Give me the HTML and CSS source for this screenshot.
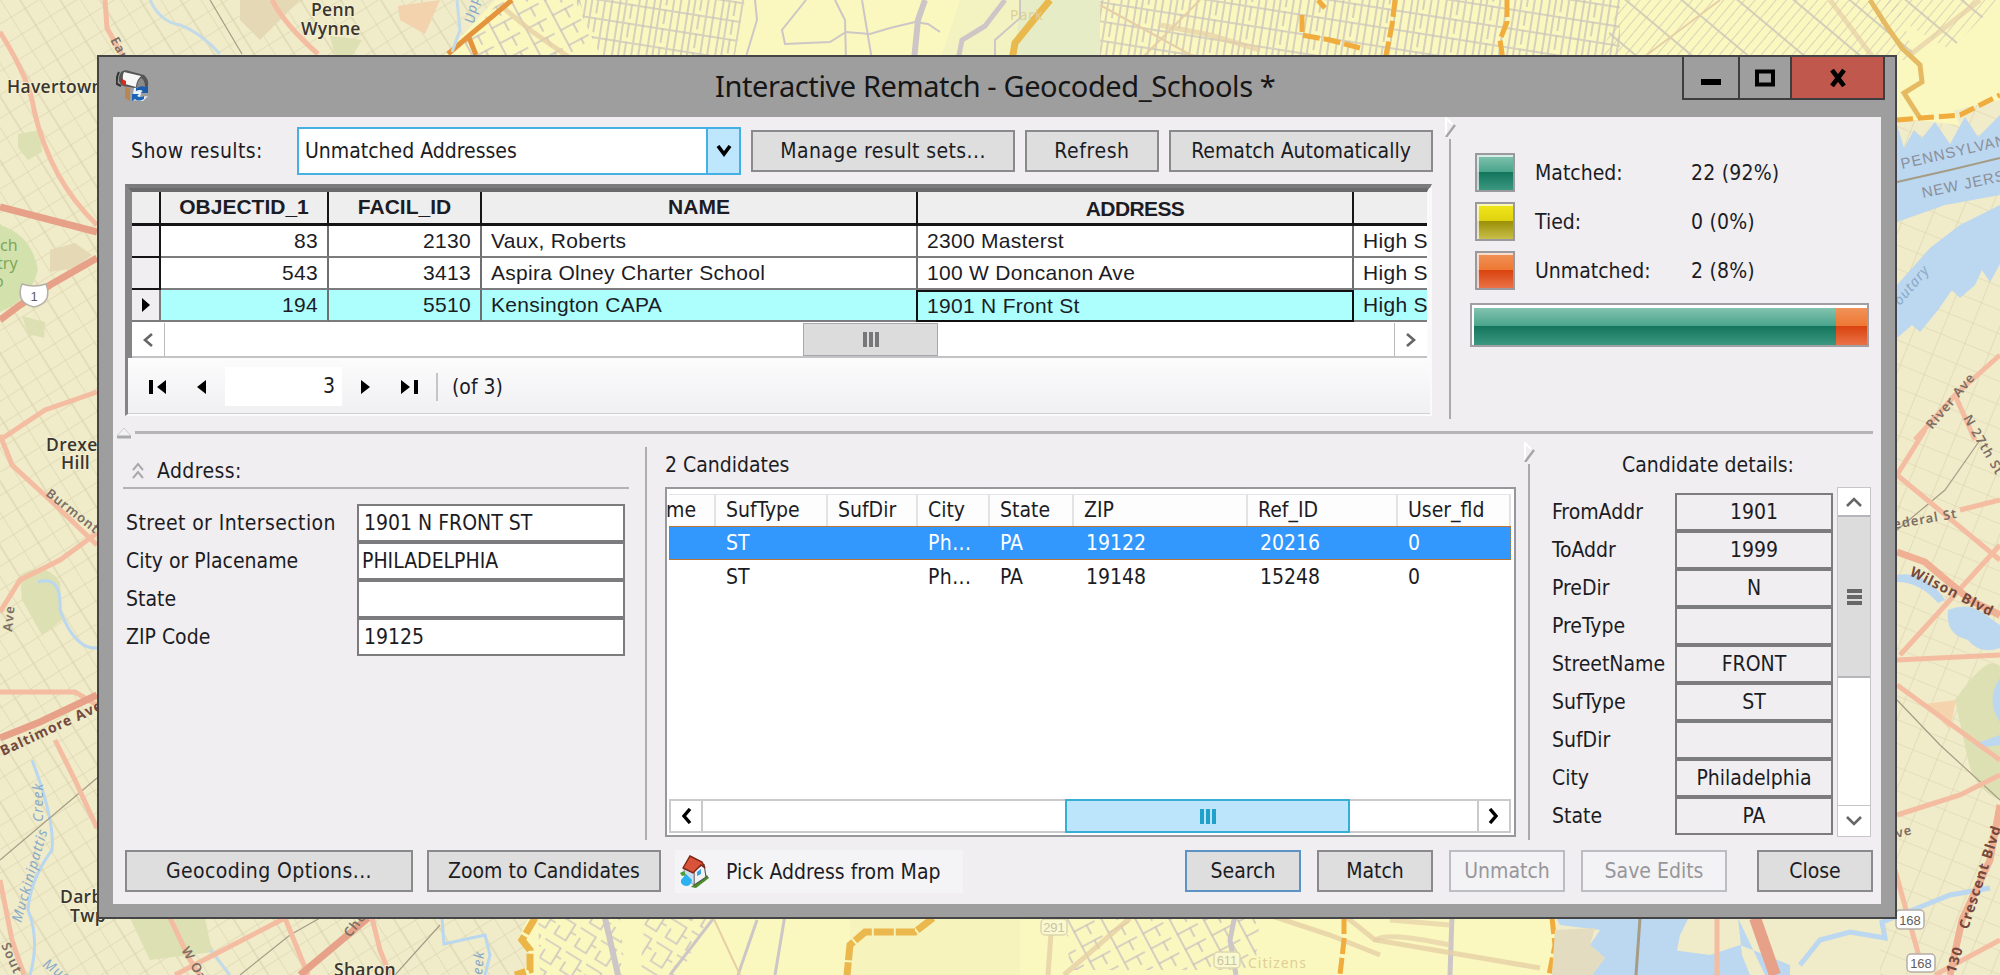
FILE: index.html
```html
<!DOCTYPE html>
<html lang="en">
<head>
<meta charset="utf-8">
<title>Interactive Rematch - Geocoded_Schools *</title>
<link rel="stylesheet" href="styles.css">
</head>
<body>
<svg class="map" viewBox="0 0 2000 975" width="2000" height="975">
  <defs>
    <pattern id="suburb" width="34" height="20" patternUnits="userSpaceOnUse" patternTransform="rotate(-32)">
      <path d="M0 0H34M0 0V20M17 0V20" stroke="#d5cfa9" stroke-width="1" fill="none"/>
    </pattern>
    <pattern id="suburb2" width="26" height="22" patternUnits="userSpaceOnUse" patternTransform="rotate(22)">
      <path d="M0 0H26M0 0V22" stroke="#d8d2ad" stroke-width="1.2" fill="none"/>
    </pattern>
    <pattern id="city" width="34" height="19" patternUnits="userSpaceOnUse" patternTransform="rotate(9)">
      <path d="M0 1H34M1 0V19M7 2V19M13 0V15M20 2V19M27 0V19" stroke="#cdc6bc" stroke-width="1.6" fill="none"/>
    </pattern>
    <pattern id="diag" width="36" height="8" patternUnits="userSpaceOnUse" patternTransform="rotate(-50)">
      <path d="M0 0H36M1 0V8" stroke="#cfc8b8" stroke-width="1.7" fill="none"/>
    </pattern>
    <pattern id="blocks" width="30" height="17" patternUnits="userSpaceOnUse" patternTransform="rotate(-28)">
      <path d="M0 1H24M1 0V17M15 0V11" stroke="#cdc5c0" stroke-width="1.6" fill="none"/>
    </pattern>
    <pattern id="loops" width="24" height="28" patternUnits="userSpaceOnUse" patternTransform="rotate(32)">
      <path d="M0 3H18V22H5V12M18 12H24" stroke="#cfc8c0" stroke-width="1.7" fill="none"/>
    </pattern>
  </defs>

  <rect width="2000" height="975" fill="#f0ebc9"/>
  <rect width="600" height="975" fill="url(#suburb)"/>
  <rect x="1880" width="120" height="975" fill="url(#suburb2)"/>

  <!-- parks and open ground -->
  <g fill="#dde0b2">
    <path d="M0 225Q32 235 38 270Q30 300 0 312Z" fill="#d3e2ad"/>
    <path d="M18 134L40 130L42 152L28 160L18 148Z"/>
    <path d="M22 316L45 322L44 338L28 334Z"/>
    <path d="M20 575Q45 560 60 582L62 620L42 635L22 600Z"/>
    <path d="M130 918H205L212 952L150 960Z"/>
    <path d="M330 36L362 40L352 56H335Z"/>
    <path d="M1955 700Q1990 650 2000 668V800Q1975 790 1968 760Z"/>
  </g>
  <g fill="#e4d9b4">
    <path d="M50 250L75 243L92 255L74 268L50 272Z"/>
    <path d="M240 0H300L260 40L240 20Z"/>
  </g>
  <path d="M398 6L440 0L425 34L400 20Z" fill="#f3d2ae"/>
  <path d="M1925 704L1956 700L1950 730Z" fill="#f5d3ad"/>

  <!-- city -->
  <path d="M495 0H1897L1925 50L1960 125L1897 118V60H440Z" fill="#faf8be"/>
  <path d="M1880 0H2000V100L1920 118L1890 120Z" fill="#faf8be"/>
  <path d="M532 910H1555V975H522L530 955L520 935Z" fill="#faf8be"/>
  <path d="M850 910H1020V975H850Z" fill="#f6f3bd"/>
  <path d="M960 0H1100V60H940Z" fill="#f3f3c2"/>
  <path d="M1020 0H1100V60H1015Z" fill="#e6edc6"/>
  <path d="M500 0H580L590 40L560 60H450Z" fill="url(#blocks)"/>
  <path d="M575 0H745L735 55H600Z" fill="url(#city)"/>
  <path d="M1100 0H1620V60H1100Z" fill="url(#city)"/>
  <path d="M1620 0H1897L1915 60H1600Z" fill="url(#diag)"/>
  <path d="M1880 0H2000L1950 50L1900 20Z" fill="url(#diag)"/>
  <path d="M538 915H620L625 975H540Z" fill="url(#loops)"/>
  <path d="M645 915H710L680 975H640Z" fill="url(#loops)"/>
  <path d="M1065 915H1260L1255 970H1070Z" fill="url(#blocks)"/>
  <g fill="none" stroke="#cdc6c6" stroke-width="2">
    <path d="M755 0L757 20L745 60M806 0L782 30L785 44L830 42L846 32L870 34L890 28L915 22L928 24L940 32"/>
    <path d="M835 0L845 20L846 60M862 0L872 60M1020 0V18L995 40V60"/>
    <path d="M925 0L918 20L914 60" stroke-width="6"/>
    <path d="M1005 0L985 26L962 40L958 60" stroke-width="5"/>
    <path d="M605 918L618 975" stroke-width="6"/>
    <path d="M785 915L775 975M757 920L738 975M716 915L670 975" stroke-width="3"/>
    <path d="M1235 915L1230 940L1236 975M1452 915L1450 975" stroke-width="5"/>
  </g>
  <g fill="none" stroke="#e6cfa6" stroke-width="5">
    <path d="M500 5L530 30L570 58M1052 920L1048 975M1130 918L1064 975M1260 912L1330 935L1380 955M1340 912L1375 940L1540 968" opacity=".8"/>
    <path d="M1375 942Q1378 930 1450 945M1390 920L1450 925M1160 25L1210 35L1260 50M1830 0L1875 60M1980 0L1910 55" opacity=".7"/>
    <path d="M1100 5L1200 60M1200 0L1140 60M1720 0L1640 60M712 915L740 975" stroke-width="2"/>
  </g>
  <g fill="none" stroke="#f0ac3c" stroke-width="5">
    <path d="M512 0L470 35L448 54M468 35L476 55" stroke="#e4943c"/>
    <path d="M1050 0L1032 22L1015 43L1012 60" stroke="#eab94e" stroke-width="7"/>
    <path d="M1395 0L1392 25L1385 60M1507 0V22L1500 40L1503 60M1318 0L1325 8M1302 15V35L1330 40L1360 48" stroke-dasharray="17 4"/>
    <path d="M1870 0L1888 28L1902 48L1920 65L1922 82L1904 93L1920 118" stroke="#e5ba63"/>
    <path d="M1897 120L1960 115L2000 95" stroke-dasharray="16 5"/>
    <path d="M535 918L522 940L530 950V970L515 975" stroke="#ebb548" stroke-width="7" stroke-dasharray="18 3"/>
    <path d="M933 918L915 932H885L865 932L850 945L847 975" stroke="#ebb84e" stroke-width="7" stroke-dasharray="20 2"/>
    <path d="M1344 918V940L1340 975M1552 918L1555 945L1549 975" stroke-dasharray="16 4"/>
  </g>

  <!-- rivers -->
  <g fill="#bcd7f0">
    <path d="M1897 125L1904 148L1914 130L1922 138L1935 122L1950 144L1965 117L1978 137L2000 115V195L1945 205L1897 222Z"/>
    <path d="M2000 220V264L1990 282L1982 270L1975 285L1960 298L1952 290L1938 310L1920 332L1912 325L1897 338V285L1930 248L1960 225L2000 205Z"/>
    <path d="M1897 575Q1925 570 1945 600L1938 603Q1920 582 1897 582Z"/>
    <path d="M1948 610Q1970 600 1990 618L2000 625V648Q1980 655 1968 640Q1945 635 1948 610Z"/>
    <path d="M2000 678Q1985 700 2000 722ZM1962 732L1980 742L2000 735V745L1978 748Z"/>
    <path d="M1555 915H1690L1680 935L1672 975H1592L1605 958L1590 945L1600 930L1560 925Z"/>
    <path d="M1672 950L1710 955L1740 945L1790 965V975H1660ZM1738 918L1742 955L1750 975H1765Z"/>
  </g>
  <path d="M1555 930L1595 928L1590 945L1605 958L1592 975H1552Z" fill="#e3dcc0"/>
  <path d="M1800 965L1820 940L1850 932L1885 938L1882 922L1900 915L1925 905L1950 895L1990 888" stroke="#bcd7f0" stroke-width="5" fill="none"/>
  <g stroke="#c3dbe9" stroke-width="3" fill="none">
    <path d="M150 0Q160 22 180 25Q200 32 220 54M457 0L460 30L452 52"/>
    <path d="M38 582Q62 575 60 610Q75 650 97 648M32 760Q55 820 52 850Q30 880 28 910Q40 940 30 975M442 918L444 944L485 935L490 955L485 975" stroke="#b9d7ef"/>
    <path d="M210 950L230 975"/>
  </g>
  <g stroke="#a59c86" stroke-width="2" fill="none">
    <path d="M1897 182L1950 170L2000 158"/>
    <path d="M1640 918L1636 975" stroke-width="3"/>
    <path d="M210 0L242 54M0 860L97 778M240 975L290 935L320 918M395 975L440 925M1897 700L1940 745L2000 800M1897 530L1945 490L1980 440" stroke-width="1.2"/>
  </g>

  <!-- highways -->
  <g stroke="#f4bda2" stroke-width="5" fill="none">
    <path d="M0 32Q30 80 34 110Q50 180 97 225M105 0L107 28L122 55M272 0Q285 25 318 54"/>
    <path d="M0 440L45 410L97 392M0 435L12 465L50 500L97 545M97 533L60 560L20 580L0 612M0 692H75L97 705M55 740L75 780L97 828"/>
    <path d="M0 880L12 940L24 975M170 918L190 960L200 975M285 918L200 962L175 975M285 918L308 975M372 918L380 950L390 975" />
    <path d="M2000 355L1955 395L1915 440M1955 395L1975 440M1925 430L1897 475M2000 545L1900 655M1897 660L2000 655M1897 475L2000 560M1897 685L2000 760M1897 815L1960 795L2000 775M1960 510L2000 500"/>
    <path d="M1717 918V975M1895 870L1920 960M2000 940L1935 975"/>
  </g>
  <g fill="none" stroke="#e6a188" stroke-width="7">
    <path d="M0 207L97 232M0 320L20 305L50 285L97 258M0 738L40 722L97 695M368 918L300 975"/>
    <path d="M1755 918L1775 975" stroke-width="12"/>
    <path d="M1897 552L1925 562L1970 600L2000 615M2000 805L1990 860L1962 920L1950 975" stroke="#efb093"/>
  </g>

  <g class="place">
    <text x="311" y="16">Penn</text>
    <text x="301" y="35">Wynne</text>
    <text x="7" y="93">Havertown</text>
    <text x="46" y="451">Drexel</text>
    <text x="61" y="469">Hill</text>
    <text x="60" y="903">Darby</text>
    <text x="70" y="922">Twp</text>
    <text x="334" y="976">Sharon</text>
  </g>
  <g class="street">
    <text transform="translate(110 40) rotate(62)">Earl</text>
    <text transform="translate(45 495) rotate(38)">Burmont</text>
    <text transform="translate(3 756) rotate(-25)" class="street-bold">Baltimore Ave</text>
    <text transform="translate(12 632) rotate(-84)">Ave</text>
    <text transform="translate(1 945) rotate(66)">Sout</text>
    <text transform="translate(181 950) rotate(60)">W Oak</text>
    <text transform="translate(350 938) rotate(-52)">Che</text>
    <text transform="translate(1932 430) rotate(-50)">River Ave</text>
    <text transform="translate(1963 418) rotate(60)">N 27th St</text>
    <text transform="translate(1894 529) rotate(-10)">ederal St</text>
    <text transform="translate(1909 575) rotate(27)" class="street-bold">Wilson Blvd</text>
    <text transform="translate(1968 930) rotate(-72)" class="street-bold">Crescent Blvd</text>
    <text transform="translate(1955 974) rotate(-72)" class="street-bold">130</text>
    <text transform="translate(1897 838) rotate(-15)">ve</text>
  </g>
  <g class="border-name">
    <text transform="translate(1902 169) rotate(-13)">PENNSYLVANIA</text>
    <text transform="translate(1923 198) rotate(-12)">NEW JERSEY</text>
  </g>
  <g class="water-name">
    <text transform="translate(1900 306) rotate(-50)">outary</text>
    <text transform="translate(21 923) rotate(-74)">Muckinipattis</text>
    <text transform="translate(43 822) rotate(-90)">Creek</text>
    <text transform="translate(42 966) rotate(35)">Muck</text>
    <text transform="translate(482 975) rotate(-85)">eek</text>
    <text transform="translate(474 24) rotate(-80)">Upp</text>
  </g>
  <g class="park-name">
    <text x="0" y="251">ch</text><text x="-3" y="269">try</text><text x="-6" y="287">o</text>
  </g>
  <g class="faint-name">
    <text x="1010" y="20">Park</text><text x="1248" y="968">Citizens</text>
  </g>
  <g fill="#fff" stroke="#b5afa5" stroke-width="1.5">
    <path d="M22 284Q34 288 46 284Q49 291 47 298Q44 305 34 307Q24 305 21 298Q19 291 22 284Z"/>
    <rect x="1896" y="910" width="28" height="19" rx="4"/>
    <rect x="1907" y="954" width="28" height="18" rx="4"/>
    <rect x="1041" y="919" width="26" height="16" rx="4" fill="#faf8cf" stroke="#ddd5ae"/>
    <rect x="1214" y="952" width="26" height="16" rx="4" fill="#faf8cf" stroke="#ddd5ae"/>
  </g>
  <g class="shield">
    <text x="34" y="301">1</text><text x="1910" y="925">168</text><text x="1921" y="968">168</text>
    <text x="1054" y="932" class="shield-faint">291</text><text x="1227" y="965" class="shield-faint">611</text>
  </g>
</svg>

<div class="window">
  <header class="titlebar">
    <svg class="app-icon" viewBox="0 0 33 33" width="33" height="33">
      <path d="M9 18V29L14 32V19Z" fill="#b98550"/>
      <path d="M5 3Q9 0 13 2L28 6Q33 10 32 17L31 20L19 19L7 17Q2 14 3 8Z" fill="#555"/>
      <path d="M8 3L25 7Q20 12 20 18L9 15Q5 9 8 3Z" fill="#f6f6f6"/>
      <path d="M25 9Q29 11 29 18L21 19Q21 12 25 9Z" fill="#8a8a8a"/>
      <path d="M3 3Q0 8 1 15L5 17" fill="none" stroke="#333" stroke-width="2"/>
      <path d="M6 10L10 12V17L6 15Z" fill="#d42f20"/>
      <path d="M18 19L27 18L24 28L32 27L27 32L16 31Z" fill="#e8f0fa"/>
      <path d="M20 19Q26 16 29 18L32 17V24H25L27 22Q24 20 20 22Z" fill="#1b5dab"/>
      <path d="M28 30Q22 33 19 30L16 32V25H23L21 27Q24 29 28 27Z" fill="#1b63b4"/>
    </svg>
    <h1 class="title">Interactive Rematch - Geocoded_Schools *</h1>
    <div class="win-buttons">
      <span class="win-btn"><svg viewBox="0 0 22 18" width="22" height="18"><path d="M1 10H21V16H1Z"/></svg></span>
      <span class="win-btn win-max"><svg viewBox="0 0 22 18" width="22" height="18"><path d="M3 2.5H19V15.5H3Z" fill="none" stroke="#000" stroke-width="4"/></svg></span>
      <span class="win-btn win-close"><svg viewBox="0 0 20 18" width="20" height="18"><path d="M4 1L16 17M16 1L4 17" stroke="#000" stroke-width="4.6"/></svg></span>
    </div>
  </header>

  <main class="client">
    <section class="results">
      <div class="results-left">
        <div class="toolbar">
          <label class="toolbar-label loose">Show results:</label>
          <div class="combo"><span class="combo-text">Unmatched Addresses</span><span class="combo-arrow"><svg viewBox="0 0 16 12" width="16" height="12"><path d="M2 1L8 9L14 1" fill="none" stroke="#000" stroke-width="3.6"/></svg></span></div>
          <button class="btn t-manage loose">Manage result sets...</button>
          <button class="btn t-refresh">Refresh</button>
          <button class="btn t-auto">Rematch Automatically</button>
        </div>
        <div class="grid-box">
          <div class="data-grid">
            <div class="row head"><span></span><span>OBJECTID_1</span><span>FACIL_ID</span><span>NAME</span><span class="low">ADDRESS</span><span></span></div>
            <div class="row"><span class="rh"></span><span class="num">83</span><span class="num">2130</span><span>Vaux, Roberts</span><span>2300 Masterst</span><span>High School</span></div>
            <div class="row"><span class="rh"></span><span class="num">543</span><span class="num">3413</span><span>Aspira Olney Charter School</span><span>100 W Doncanon Ave</span><span>High School</span></div>
            <div class="row current"><span class="rh"><svg viewBox="0 0 8 14" width="8" height="14"><path d="M0 0L8 7L0 14Z"/></svg></span><span class="num">194</span><span class="num">5510</span><span>Kensington CAPA</span><span class="focus">1901 N Front St</span><span>High School</span></div>
            <div class="hscroll grid-scroll">
              <span class="sb-btn"><svg viewBox="0 0 12 16" width="12" height="16"><path d="M10 2L3 8L10 14" fill="none" stroke="#666" stroke-width="2.6"/></svg></span>
              <span class="track"><span class="thumb grid-thumb"><i></i><i></i><i></i></span></span>
              <span class="sb-btn"><svg viewBox="0 0 12 16" width="12" height="16"><path d="M2 2L9 8L2 14" fill="none" stroke="#666" stroke-width="2.6"/></svg></span>
            </div>
          </div>
          <div class="nav">
            <svg viewBox="0 0 17 16" width="17" height="16"><path d="M0 1H4V15H0ZM17 1V15L8 8Z"/></svg>
            <svg class="prev" viewBox="0 0 9 16" width="9" height="16"><path d="M9 1V15L0 8Z"/></svg>
            <span class="nav-input">3</span>
            <svg class="next" viewBox="0 0 9 16" width="9" height="16"><path d="M0 1V15L9 8Z"/></svg>
            <svg class="last" viewBox="0 0 17 16" width="17" height="16"><path d="M13 1H17V15H13ZM0 1V15L9 8Z"/></svg>
            <span class="nav-sep"></span>
            <span class="nav-of">(of 3)</span>
          </div>
        </div>
      </div>
      <div class="vsplit split-top">
        <svg viewBox="0 0 12 20" width="12" height="20"><path d="M1 19V1L7 7" fill="none" stroke="#fff" stroke-width="2"/><path d="M1 20L10 8" stroke="#a5a5a5" stroke-width="2.4"/></svg>
        <span></span>
      </div>
      <div class="stats">
        <div class="stat"><span class="swatch green"></span><span class="stat-name">Matched:</span><span class="stat-val">22 (92%)</span></div>
        <div class="stat"><span class="swatch yellow"></span><span class="stat-name">Tied:</span><span class="stat-val">0 (0%)</span></div>
        <div class="stat"><span class="swatch orange"></span><span class="stat-name">Unmatched:</span><span class="stat-val">2 (8%)</span></div>
        <div class="bar"><span class="green bar-main"></span><span class="orange bar-rest"></span></div>
      </div>
    </section>

    <div class="hsplit">
      <svg viewBox="0 0 16 12" width="16" height="12"><path d="M1 9L8 1L15 9" fill="#f2f2f2" stroke="#ccc"/><path d="M1 10H15" stroke="#aaa" stroke-width="3"/></svg>
      <span></span>
    </div>

    <section class="details">
      <div class="address">
        <div class="address-head"><svg viewBox="0 0 14 18" width="14" height="18"><path d="M2 8L7 2L12 8M2 16L7 10L12 16" fill="none" stroke="#a9a9a9" stroke-width="2"/></svg><span class="loose">Address:</span></div>
        <div class="field"><label class="loose">Street or Intersection</label><span class="input">1901 N FRONT ST</span></div>
        <div class="field"><label>City or Placename</label><span class="input tight">PHILADELPHIA</span></div>
        <div class="field"><label>State</label><span class="input"></span></div>
        <div class="field"><label>ZIP Code</label><span class="input">19125</span></div>
      </div>
      <div class="vline"></div>
      <div class="candidates">
        <div class="cand-title">2 Candidates</div>
        <div class="list">
          <div class="lrow lhead"><span class="cut">me</span><span>SufType</span><span>SufDir</span><span>City</span><span>State</span><span>ZIP</span><span>Ref_ID</span><span>User_fld</span></div>
          <div class="lrow sel"><span></span><span>ST</span><span></span><span class="loose">Ph...</span><span>PA</span><span>19122</span><span>20216</span><span>0</span></div>
          <div class="lrow"><span></span><span>ST</span><span></span><span class="loose">Ph...</span><span>PA</span><span>19148</span><span>15248</span><span>0</span></div>
          <div class="hscroll list-scroll">
            <span class="sb-btn"><svg viewBox="0 0 12 16" width="12" height="16"><path d="M10 1L4 8L10 15" fill="none" stroke="#000" stroke-width="3.4"/></svg></span>
            <span class="track"><span class="thumb list-thumb"><i></i><i></i><i></i></span></span>
            <span class="sb-btn"><svg viewBox="0 0 12 16" width="12" height="16"><path d="M2 1L8 8L2 15" fill="none" stroke="#000" stroke-width="3.4"/></svg></span>
          </div>
        </div>
      </div>
      <div class="vsplit split-mid">
        <svg viewBox="0 0 12 20" width="12" height="20"><path d="M1 19V1L7 7" fill="none" stroke="#fff" stroke-width="2"/><path d="M1 20L10 8" stroke="#a5a5a5" stroke-width="2.4"/></svg>
        <span></span>
      </div>
      <div class="cdetails">
        <div class="cd-title">Candidate details:</div>
        <div class="cd-body">
          <div class="cd-rows">
            <div class="cd-row"><label>FromAddr</label><span>1901</span></div>
            <div class="cd-row"><label>ToAddr</label><span>1999</span></div>
            <div class="cd-row"><label>PreDir</label><span>N</span></div>
            <div class="cd-row"><label>PreType</label><span></span></div>
            <div class="cd-row"><label>StreetName</label><span>FRONT</span></div>
            <div class="cd-row"><label>SufType</label><span>ST</span></div>
            <div class="cd-row"><label>SufDir</label><span></span></div>
            <div class="cd-row"><label>City</label><span>Philadelphia</span></div>
            <div class="cd-row"><label>State</label><span>PA</span></div>
          </div>
          <div class="vscroll">
            <span class="vs-btn"><svg viewBox="0 0 16 12" width="16" height="12"><path d="M1 10L8 3L15 10" fill="none" stroke="#666" stroke-width="2.6"/></svg></span>
            <span class="vthumb"><i></i><i></i><i></i></span>
            <span class="vs-btn vs-down"><svg viewBox="0 0 16 12" width="16" height="12"><path d="M1 2L8 9L15 2" fill="none" stroke="#666" stroke-width="2.6"/></svg></span>
          </div>
        </div>
      </div>
    </section>

    <footer class="actions">
      <button class="btn a-geo loose">Geocoding Options...</button>
      <button class="btn a-zoom">Zoom to Candidates</button>
      <div class="pick">
        <svg viewBox="0 0 30 33" width="30" height="33">
          <path d="M13 31L28 20L30 23L17 33L12 32Z" fill="#4c8a2a"/>
          <path d="M15 15L25 9L27 22L15 30Z" fill="#f1f1f4" stroke="#444"/>
          <path d="M5 14L15 17V30L6 23Z" fill="#c9dff0" stroke="#666" stroke-width=".6"/>
          <path d="M4 13L11 1L23 7L26 13L22 10L14 18Z" fill="#d9533a" stroke="#7d2415" stroke-width="1.4"/>
          <path d="M18 17L22 14V19L18 21Z" fill="#39a3e0"/>
          <path d="M7 19L13 25Q12 31 7 31Q1 30 2 25Z" fill="#2ab2f0"/>
          <path d="M1 18L5 16L7 20L3 21Z" fill="#4f9c35"/>
        </svg>
        <span>Pick Address from Map</span>
      </div>
      <button class="btn a-search">Search</button>
      <button class="btn a-match">Match</button>
      <button class="btn a-unmatch" disabled>Unmatch</button>
      <button class="btn a-save" disabled>Save Edits</button>
      <button class="btn a-close">Close</button>
    </footer>
  </main>
</div>
</body>
</html>
```
FILE: styles.css
```css
* { box-sizing: border-box; }
body {
  margin: 0;
  width: 2000px;
  height: 975px;
  overflow: hidden;
  font: 21px/24px "DejaVu Sans Condensed", "DejaVu Sans", sans-serif;
  font-stretch: condensed;
  color: #1c1c24;
  position: relative;
}
svg { display: block; flex: none; }
.loose { letter-spacing: .4px; }

/* map */
.map { position: absolute; left: 0; top: 0; }
.place { font: 600 17.5px "Open Sans", sans-serif; fill: #3a3630; stroke: #f5f0d2; stroke-width: 2px; paint-order: stroke; letter-spacing: .3px; }
.street { font: 600 13px "Noto Sans", sans-serif; fill: #7d6f63; letter-spacing: 1px; }
.street-bold { font-weight: 700; font-size: 14px; fill: #74483c; }
.border-name { font: 15px "Liberation Sans", sans-serif; fill: #8a909a; letter-spacing: 1px; }
.water-name { font: italic 14px "Noto Sans", sans-serif; fill: #88aac8; letter-spacing: 1px; }
.park-name { font: 16px "Noto Sans", sans-serif; fill: #7ea85c; }
.faint-name { font: 14px "Noto Sans", sans-serif; fill: #dfcf96; letter-spacing: 1px; }
.shield { font: 13px "Liberation Sans", sans-serif; fill: #5d5d5d; text-anchor: middle; }
.shield-faint { fill: #c9c4a5; }

/* window frame */
.window {
  position: absolute;
  left: 97px;
  top: 55px;
  width: 1800px;
  height: 864px;
  border: 2px solid #454547;
  background: #9e9e9f;
  display: flex;
  flex-direction: column;
}
.titlebar { height: 60px; flex: none; display: flex; padding-left: 17px; }
.app-icon { margin-top: 12px; }
.title {
  flex: 1;
  margin: 0;
  padding-left: 566px;
  font: 400 29px/58px "Noto Sans", sans-serif;
  letter-spacing: -.4px;
  white-space: nowrap;
  color: #161616;
}
.win-buttons { display: flex; height: 43px; margin-right: 10px; border: 2px solid #3d3d3f; border-top: 0; }
.win-btn { width: 54px; display: flex; align-items: center; justify-content: center; }
.win-max { width: 54px; border-left: 2px solid #3d3d3f; border-right: 2px solid #3d3d3f; }
.win-close { width: 91px; background: #c1584e; }

.client {
  margin: 0 14px;
  width: 1768px;
  height: 787px;
  background: #f0eef1;
  display: flex;
  flex-direction: column;
}

/* shared controls */
.btn {
  height: 42px;
  padding: 0;
  border: 2px solid #8a8a8c;
  border-radius: 0;
  background: #dededf;
  font-family: inherit;
  font-size: inherit;
  font-stretch: condensed;
  color: inherit;
  white-space: nowrap;
  flex: none;
}
.btn:disabled { background: #f3f2f4; border-color: #bcbdc0; color: #97979b; }
.hscroll { display: flex; background: #fff; }
.sb-btn { display: flex; align-items: center; justify-content: center; flex: none; }
.track { flex: 1; display: flex; }
.thumb { display: flex; align-items: center; justify-content: center; gap: 2px; }
.thumb i { width: 4px; height: 15px; background: #77777a; }
.vsplit { width: 12px; flex: none; display: flex; flex-direction: column; }
.vsplit span { width: 2px; flex: 1; background: #aaaaac; }

/* results */
.results { display: flex; height: 309px; }
.results-left { width: 1332px; }
.toolbar { height: 67px; padding-left: 18px; display: flex; align-items: center; gap: 10px; white-space: nowrap; }
.toolbar-label { width: 156px; }
.combo { width: 444px; height: 48px; border: 2px solid #45b0e4; background: #fff; display: flex; }
.combo-text { flex: 1; padding-left: 6px; line-height: 44px; }
.combo-arrow { width: 33px; background: #bee6fd; border-left: 2px solid #45b0e4; display: flex; align-items: center; justify-content: center; }
.t-manage { width: 264px; }
.t-refresh { width: 134px; letter-spacing: .6px; }
.t-auto { width: 264px; }

.grid-box {
  margin-left: 12px;
  width: 1307px;
  height: 232px;
  border-left: 3px solid #848486;
  border-top: 4px solid #7b7b7d;
  border-right: 2px solid #fafafa;
  border-bottom: 2px solid #fafafa;
  background: #f8f7f9;
}
.data-grid { width: 1301px; border-left: 4px solid #858587; border-top: 4px solid #6a6a6c; border-right: 2px solid #fafafa; overflow: hidden; }
.row {
  display: grid;
  grid-template-columns: 29px 168px 153px 436px 436px 75px;
  height: 32px;
  font: 21px/30px "Liberation Sans", sans-serif;
  letter-spacing: .3px;
  background: #fff;
}
.row span { border-right: 2px solid #6f6f71; border-bottom: 2px solid #7c7c7e; padding-left: 9px; white-space: nowrap; overflow: hidden; }
.row span:last-child { border-right: 0; }
.row .num { text-align: right; padding: 0 9px 0 0; }
.row .rh { padding-left: 10px; background: #f0eef0; border-color: #151515; display: flex; align-items: center; }
.row.head { height: 34px; background: #efeeef; font-weight: 700; text-align: center; letter-spacing: 0; }
.row.head span { border-color: #151515; border-bottom-width: 3px; padding: 0; }
.row.head .low { padding-top: 2px; letter-spacing: -.6px; }
.row.current span { background: #adfffe; }
.row.current .rh { background: #f0eef0; border-color: #7c7c7e; }
.row.current .focus { border: 2px solid #101010; padding-left: 9px; line-height: 27px; margin-left: -2px; }
.grid-scroll { height: 36px; padding-top: 1px; border-bottom: 2px solid #c3c3c5; }
.grid-scroll .sb-btn { width: 33px; border-right: 1px solid #bbb; }
.grid-scroll .sb-btn:last-child { border-left: 1px solid #bbb; border-right: 0; }
.grid-thumb { width: 135px; margin-left: 638px; background: #dcdcdd; border: 1px solid #a5a9ac; }

.nav { height: 56px; padding: 2px 0 0 21px; display: flex; align-items: center; background: linear-gradient(#fcfcfd, #f0eff1); border-bottom: 1px solid #d0d0d2; }
.prev { margin-left: 31px; }
.nav-input { width: 117px; height: 39px; margin-left: 19px; background: #fff; text-align: right; padding-right: 7px; line-height: 39px; }
.next { margin-left: 19px; }
.last { margin-left: 31px; }
.nav-sep { width: 2px; height: 28px; margin-left: 18px; background: #c5c5c8; }
.nav-of { margin-left: 14px; }

.split-top { padding-bottom: 7px; }
.split-top span, .split-mid span { margin-left: 4px; margin-top: 2px; }
.stats { flex: 1; padding: 36px 0 0 18px; }
.stat { display: flex; align-items: center; height: 49px; padding-bottom: 10px; }
.swatch { width: 40px; height: 39px; border: 2px solid #9a9a9e; box-shadow: inset 2px 2px #ffffffb0; flex: none; }
.green { background: linear-gradient(#83c3ae 0, #4aa58c 48%, #14765d 50%, #3b9780 100%); }
.yellow { background: linear-gradient(#f2e81c 0, #dfd20f 48%, #9b9006 50%, #c9bf4a 100%); }
.orange { background: linear-gradient(#f09258 0, #ee7834 48%, #d9430f 50%, #ea7247 100%); }
.stat-name { width: 156px; margin-left: 20px; }
.stat-val { letter-spacing: .2px; }
.bar { width: 399px; height: 44px; margin: 3px 0 0 -5px; border: 2px solid #a0a0a4; display: flex; padding: 3px 0 0 2px; background: #fff; }
.bar-main { width: 362px; }
.bar-rest { flex: 1; }

.hsplit { height: 14px; display: flex; padding-left: 3px; }
.hsplit svg { margin-top: 1px; }
.hsplit span { height: 3px; width: 1738px; margin: 5px 0 0 3px; background: #b5b5b7; }

/* address form */
.details { display: flex; height: 402px; white-space: nowrap; }
.address { width: 532px; flex: none; padding-left: 10px; }
.address-head { height: 49px; width: 506px; border-bottom: 2px solid #b2b2b5; display: flex; align-items: center; padding: 14px 0 0 8px; margin-bottom: 15px; }
.address-head span { margin-left: 12px; }
.field { display: flex; height: 38px; align-items: center; padding-left: 3px; }
.field label { width: 231px; }
.input { width: 268px; height: 38px; border: 2px solid #7c7c7f; background: #fff; padding-left: 5px; line-height: 35px; }
.input.tight { padding-left: 3px; }
.vline { width: 2px; height: 393px; margin-top: 7px; background: #aeaeb1; flex: none; }

/* candidate list */
.candidates { width: 869px; flex: none; padding-left: 18px; }
.cand-title { height: 47px; line-height: 50px; }
.list { width: 851px; height: 350px; border: 2px solid #96989c; padding: 5px 3px 0 2px; background: #fff; display: flex; flex-direction: column; }
.lrow { display: grid; grid-template-columns: 47px 112px 90px 72px 84px 174px 150px 1fr; height: 34px; line-height: 34px; }
.lrow span { padding-left: 10px; overflow: hidden; }
.lrow span:nth-child(6), .lrow span:nth-child(7) { padding-left: 12px; }
.lhead { height: 32px; line-height: 30px; background: #fdfdfe; border-top: 1px solid #e5e5e7; }
.lhead span { border-right: 2px solid #e3e3e6; }
.lhead span:nth-child(6), .lhead span:nth-child(7) { padding-left: 10px; }
.lhead .cut { padding-left: 0; margin-left: -3px; }
.sel { background: #3398fe; color: #fff; outline: 1px dotted #b8722f; outline-offset: -1px; }
.list-scroll { height: 34px; margin-top: auto; margin-bottom: 2px; border: 2px solid #cacacc; }
.list-scroll .sb-btn { width: 32px; border-right: 2px solid #cacacc; }
.list-scroll .sb-btn:last-child { border-right: 0; border-left: 2px solid #cacacc; }
.list-thumb { width: 285px; margin: -2px 0 -2px 362px; background: #bce5fc; border: 2px solid #37aed6; }
.list-thumb i { background: #1fa1c9; }

/* candidate details */
.split-mid { padding-bottom: 2px; margin-left: 8px; padding-top: 2px; }
.cdetails { width: 344px; flex: none; padding-left: 16px; }
.cd-title { height: 47px; line-height: 50px; padding-left: 70px; }
.cd-body { display: flex; }
.cd-rows { padding-top: 6px; width: 281px; }
.cd-row { display: flex; height: 38px; align-items: center; }
.cd-row label { width: 123px; flex: none; }
.cd-row span { width: 158px; height: 38px; border: 2px solid #7c7c7f; text-align: center; line-height: 35px; }
.vscroll { width: 34px; height: 350px; margin-left: 4px; border: 1px solid #c6c6c9; background: #fff; display: flex; flex-direction: column; }
.vs-btn { height: 27px; display: flex; align-items: center; justify-content: center; flex: none; }
.vs-down { margin-top: auto; height: 31px; border-top: 1px solid #c6c6c9; }
.vthumb { height: 163px; background: #dcdcdd; border: solid #b5b6b9; border-width: 2px 0; display: flex; flex-direction: column; gap: 2px; align-items: center; justify-content: center; }
.vthumb i { width: 15px; height: 4px; background: #67676a; }

/* bottom buttons */
.actions { flex: 1; display: flex; align-items: flex-start; padding: 8px 0 0 12px; }
.a-geo { width: 288px; }
.a-zoom { width: 234px; margin-left: 14px; }
.pick { width: 288px; height: 43px; margin-left: 14px; padding-left: 4px; display: flex; align-items: center; background: #f4f3f5; white-space: nowrap; }
.pick span { margin-left: 17px; }
.a-search { width: 116px; margin-left: 222px; border-color: #5c93c4; }
.a-match, .a-unmatch { width: 116px; margin-left: 16px; }
.a-save { width: 146px; margin-left: 16px; }
.a-close { width: 116px; margin-left: 30px; }
```
